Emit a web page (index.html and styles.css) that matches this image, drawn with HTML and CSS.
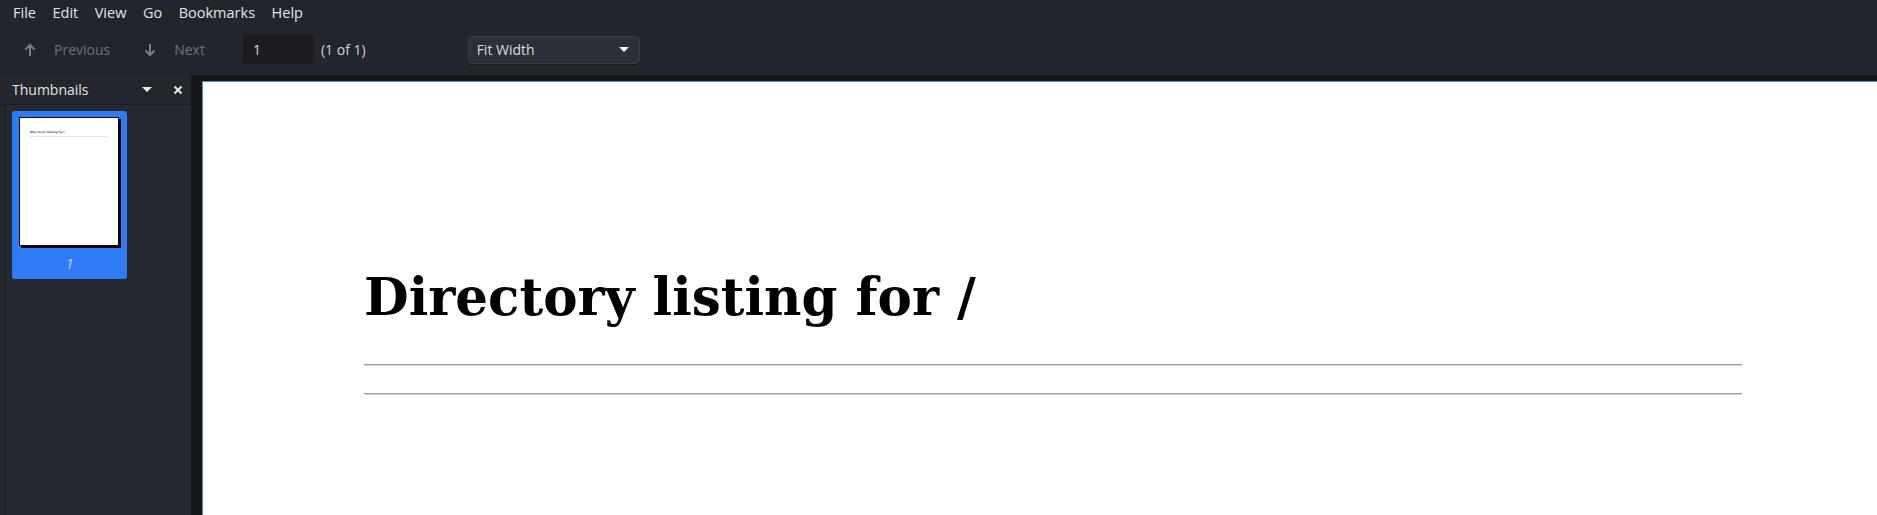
FILE: index.html
```html
<!DOCTYPE html>
<html>
<head>
<meta charset="utf-8">
<title>Document Viewer</title>
<link rel="stylesheet" href="styles.css">
</head>
<body>
<div class="app">
  <div class="menubar">
    <span class="menu">File</span>
    <span class="menu">Edit</span>
    <span class="menu">View</span>
    <span class="menu">Go</span>
    <span class="menu">Bookmarks</span>
    <span class="menu">Help</span>
  </div>
  <div class="toolbar">
    <div class="navbtn prev">
      <svg class="arrow" width="12" height="14" viewBox="0 0 12 14"><path d="M6 13V2M1.5 6.5L6 2l4.5 4.5" fill="none" stroke="#7b7f87" stroke-width="2"/></svg>
      <span>Previous</span>
    </div>
    <div class="navbtn next">
      <svg class="arrow" width="12" height="14" viewBox="0 0 12 14"><path d="M6 1v11M1.5 7.5L6 12l4.5-4.5" fill="none" stroke="#7b7f87" stroke-width="2"/></svg>
      <span>Next</span>
    </div>
    <div class="pageinput">1</div>
    <span class="pagecount">(1 of 1)</span>
    <div class="zoomselect">
      <span>Fit Width</span>
      <span class="caret"></span>
    </div>
  </div>
  <div class="main">
    <div class="sidebar">
      <div class="sidehead">
        <span class="sidetitle">Thumbnails</span>
        <span class="sidecaret"></span>
        <svg class="sideclose" width="10" height="10" viewBox="0 0 10 10"><path d="M1.5 1.5l7 7M8.5 1.5l-7 7" stroke="#e6e6e6" stroke-width="2"/></svg>
      </div>
      <div class="sidebody">
        <div class="thumb">
          <div class="thumbpage">
            <div class="minititle">Directory listing for /</div>
            <div class="miniline"></div>
          </div>
          <div class="thumblabel">1</div>
        </div>
      </div>
    </div>
    <div class="viewer">
      <div class="page">
        <h1 class="heading">Directory listing for /</h1>
        <hr class="rule first">
        <hr class="rule second">
      </div>
    </div>
  </div>
</div>
</body>
</html>
```
FILE: styles.css
```css
html, body {
  margin: 0;
  padding: 0;
  width: 1877px;
  height: 515px;
  overflow: hidden;
  background: #22252c;
  font-family: "Open Sans", "Noto Sans", sans-serif;
}
.app {
  display: flex;
  flex-direction: column;
  height: 515px;
}
.menubar {
  height: 24px;
  display: flex;
  align-items: center;
  gap: 16.5px;
  padding-left: 13px;
  color: #e2e3e6;
  font-size: 14.5px;
}
.toolbar {
  height: 51px;
  display: flex;
  align-items: center;
  font-size: 14px;
  color: #6e727a;
}
.navbtn {
  display: flex;
  align-items: center;
}
.navbtn .arrow {
  margin-right: 18px;
}
.prev {
  margin-left: 24px;
}
.next {
  margin-left: 34px;
}
.pageinput {
  margin-left: 38px;
  width: 61px;
  height: 29px;
  padding-left: 10px;
  box-sizing: content-box;
  background: #1a1c21;
  border-radius: 4px;
  color: #d9d9db;
  line-height: 29px;
}
.pagecount {
  margin-left: 7px;
  color: #d2d3d6;
}
.zoomselect {
  margin-left: 102px;
  width: 172px;
  height: 28px;
  box-sizing: border-box;
  border: 1px solid #3a3e47;
  border-radius: 4px;
  background: #2b2f37;
  color: #d9dadd;
  display: flex;
  align-items: center;
  justify-content: space-between;
  padding: 0 10px 0 8px;
  box-shadow: 0 1px 1px rgba(0,0,0,0.35);
}
.caret {
  width: 0;
  height: 0;
  border-left: 5px solid transparent;
  border-right: 5px solid transparent;
  border-top: 5px solid #f0f0f0;
}
.main {
  flex: 1;
  display: flex;
  min-height: 0;
}
.sidebar {
  width: 191px;
  display: flex;
  flex-direction: column;
  background: #23262c;
}
.sidehead {
  height: 29px;
  border-bottom: 1px solid #1b1d22;
  display: flex;
  align-items: center;
  padding-left: 12px;
  color: #e4e4e6;
  font-size: 14px;
}
.sidetitle {
  width: 130px;
}
.sidecaret {
  width: 0;
  height: 0;
  border-left: 5px solid transparent;
  border-right: 5px solid transparent;
  border-top: 5px solid #eeeeee;
}
.sideclose {
  margin-left: 21px;
}
.sidebody {
  flex: 1;
  margin-left: 5px;
  border-left: 1px solid #1b1d22;
  background: #262931;
  padding: 6px 0 0 6px;
}
.thumb {
  width: 115px;
  height: 168px;
  background: #2f7af5;
  border-radius: 3px;
  box-sizing: border-box;
  padding: 6px 0 0 7px;
}
.thumbpage {
  width: 100px;
  height: 129px;
  background: #ffffff;
  border: 1px solid #0a0a0a;
  box-shadow: 2px 2px 0 #000;
  box-sizing: border-box;
  padding: 12px 10px 0 10px;
}
.minititle {
  font-family: "DejaVu Serif", serif;
  font-weight: bold;
  font-size: 3px;
  color: #444;
  white-space: nowrap;
}
.miniline {
  margin-top: 2px;
  height: 0;
  border-top: 1px solid #e6e6e6;
}
.thumblabel {
  margin-top: 8px;
  text-align: center;
  padding-right: 7px;
  font-style: italic;
  font-size: 14px;
  color: #bcd6ff;
}
.viewer {
  flex: 1;
  background: #15171b;
  padding: 6px 0 0 11px;
  overflow: hidden;
}
.page {
  height: 100%;
  background: #ffffff;
  border-top: 1px solid #5d88b8;
  border-left: 1px solid #5d88b8;
  padding: 0 0 0 161px;
  box-sizing: border-box;
}
.heading {
  margin: 0;
  padding-top: 185px;
  font-family: "DejaVu Serif", serif;
  font-weight: bold;
  font-size: 51.5px;
  line-height: 60px;
  color: #000;
}
.rule {
  width: 1378px;
  margin: 0;
  height: 0;
  border: 0;
  border-top: 1px solid #9a9a9a;
  border-bottom: 1px solid #dcdcdc;
}
.rule.first {
  margin-top: 37px;
}
.rule.second {
  margin-top: 27px;
}
```
